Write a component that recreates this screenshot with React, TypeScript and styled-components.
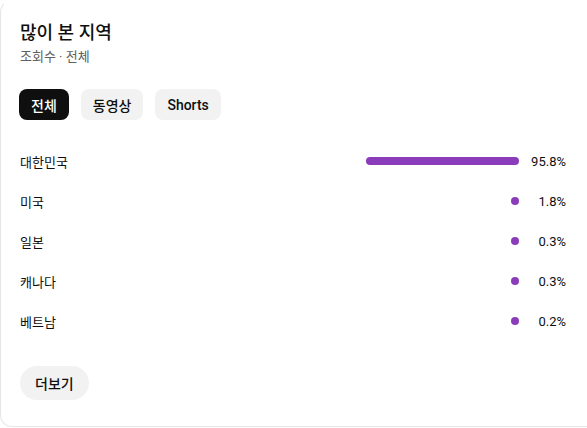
import React from 'react';
import styled, { createGlobalStyle } from 'styled-components';

const GlobalStyle = createGlobalStyle`
    html, body {
        margin: 0;
        padding: 0;
        background: #fff;
        overflow: hidden;
    }
    body {
        font-family: Roboto, 'Noto Sans CJK KR', sans-serif;
        color: #0f0f0f;
    }
`;

const Card = styled.section`
    box-sizing: border-box;
    width: 600px;
    height: 427px;
    border: 1px solid #e6e6e6;
    border-top-color: transparent;
    border-radius: 12px;
    padding: 19px 33px 0 19px;
    display: flex;
    flex-direction: column;
`;

const Title = styled.h2`
    margin: 0;
    font-size: 18px;
    font-weight: 500;
    line-height: 26px;
`;

const Subtitle = styled.div`
    margin-top: 2px;
    font-size: 13px;
    line-height: 18px;
    color: #606060;
`;

const Chips = styled.div`
    display: flex;
    gap: 12px;
    margin-top: 23px;
    margin-left: -1px;
`;

const Chip = styled.button<{ $active?: boolean }>`
    height: 31px;
    padding: 0 12px;
    border: none;
    border-radius: 8px;
    font-family: inherit;
    font-size: 14px;
    font-weight: 500;
    background: ${p => (p.$active ? '#0f0f0f' : '#f2f2f2')};
    color: ${p => (p.$active ? '#fff' : '#0f0f0f')};
`;

const List = styled.div`
    display: flex;
    flex-direction: column;
    margin-top: 21px;
`;

const Row = styled.div`
    display: flex;
    align-items: center;
    height: 40px;
    font-size: 13px;
`;

const Country = styled.div`
    flex: 1;
`;

const Track = styled.div`
    width: 160px;
    display: flex;
    justify-content: flex-end;
`;

const Bar = styled.div`
    height: 8px;
    min-width: 8px;
    border-radius: 4px;
    background: #8a3cba;
`;

const Percent = styled.div`
    width: 47px;
    text-align: right;
`;

const MoreButton = styled.button`
    align-self: flex-start;
    margin-top: 25px;
    height: 34px;
    padding: 0 15px;
    border: none;
    border-radius: 17px;
    background: #f2f2f2;
    font-family: inherit;
    font-size: 14px;
    font-weight: 500;
    color: #0f0f0f;
`;

const regions = [
    { name: '대한민국', pct: 95.8 },
    { name: '미국', pct: 1.8 },
    { name: '일본', pct: 0.3 },
    { name: '캐나다', pct: 0.3 },
    { name: '베트남', pct: 0.2 },
];

export default function App() {
    return (
        <>
            <GlobalStyle />
            <Card>
                <Title>많이 본 지역</Title>
                <Subtitle>조회수 · 전체</Subtitle>
                <Chips>
                    <Chip $active>전체</Chip>
                    <Chip>동영상</Chip>
                    <Chip>Shorts</Chip>
                </Chips>
                <List>
                    {regions.map(r => (
                        <Row key={r.name}>
                            <Country>{r.name}</Country>
                            <Track>
                                <Bar style={{ width: `${r.pct}%` }} />
                            </Track>
                            <Percent>{r.pct.toFixed(1)}%</Percent>
                        </Row>
                    ))}
                </List>
                <MoreButton>더보기</MoreButton>
            </Card>
        </>
    );
}
